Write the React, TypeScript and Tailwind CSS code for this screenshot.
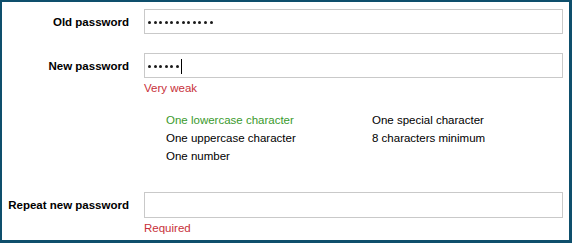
import React from "react";

const Dots = ({ count, caret }: { count: number; caret?: boolean }) => (
  <div className="flex items-center gap-[2.6px] pl-[3px] pt-[1px]">
    {Array.from({ length: count }).map((_, i) => (
      <span key={i} className="w-[3px] h-[3px] rounded-full bg-[#1a1a1a]" />
    ))}
    {caret && <span className="-ml-[1px] w-px h-[15px] bg-black" />}
  </div>
);

const Field = ({ children }: { children?: React.ReactNode }) => (
  <div className="h-[25px] border border-[#c9c9c9] bg-white flex items-center">
    {children}
  </div>
);

const Label = ({ children }: { children: React.ReactNode }) => (
  <div className="h-[25px] flex items-center justify-end font-bold text-black">
    {children}
  </div>
);

export default function App() {
  const reqs = [
    { text: "One lowercase character", ok: true },
    { text: "One uppercase character", ok: false },
    { text: "One number", ok: false },
    { text: "One special character", ok: false },
    { text: "8 characters minimum", ok: false },
  ];

  return (
    <div
      className="w-[572px] h-[243px] bg-white border-l-2 border-t-2 border-r-3 border-b-3 border-[#0e4f6c] text-[11.5px] leading-[16px] text-black"
      style={{ fontFamily: '"Liberation Sans", Arial, sans-serif' }}
    >
      <div className="grid grid-cols-[127px_1fr] gap-x-[15px] pr-[6px] pt-[7px]">
        <Label>Old password</Label>
        <Field>
          <Dots count={12} />
        </Field>

        <div className="col-span-2 h-[19px]" />

        <Label>New password</Label>
        <div>
          <Field>
            <Dots count={6} caret />
          </Field>
          <div className="mt-[2px] text-[#c8303a]">Very weak</div>
          <div className="mt-[15px] ml-[22px] grid grid-flow-col grid-rows-3 grid-cols-[206px_1fr] leading-[18px]">
            {reqs.map((r) => (
              <div key={r.text} className={r.ok ? "text-[#3a9a2c]" : "text-black"}>
                {r.text}
              </div>
            ))}
          </div>
        </div>

        <div className="col-span-2 h-[27px]" />

        <Label>Repeat new password</Label>
        <div>
          <div className="h-[26px] border border-[#c9c9c9] bg-white" />
          <div className="mt-[2px] text-[#c8303a]">Required</div>
        </div>
      </div>
    </div>
  );
}
